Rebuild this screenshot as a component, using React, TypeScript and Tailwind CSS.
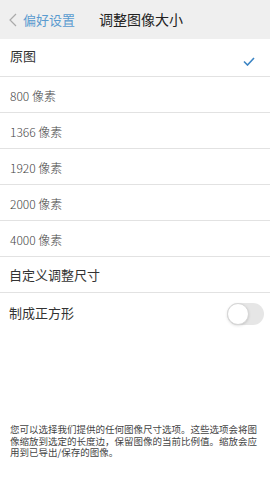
import React, { useState } from 'react';

const sizes = ['800 像素', '1366 像素', '1920 像素', '2000 像素', '4000 像素'];

export default function App() {
  const [square, setSquare] = useState(false);

  return (
    <div
      className="w-[270px] h-[480px] bg-white text-[#333] overflow-hidden"
      style={{ fontFamily: '"Noto Sans CJK SC", "Noto Sans", sans-serif' }}
    >
      {/* Header */}
      <div className="h-[39px] bg-[#efefef] flex items-center relative">
        <button className="flex items-center pl-[9px] text-[#5b9bd0] text-[13px]">
          <svg width="8" height="14" viewBox="0 0 8 14" className="mr-[6px]">
            <path d="M7 1 L1 7 L7 13" fill="none" stroke="#aaaaaa" strokeWidth="1.2" />
          </svg>
          偏好设置
        </button>
        <div className="absolute left-[99px] text-[14px] text-[#222]">调整图像大小</div>
      </div>

      {/* Options */}
      <div className="h-[38px] flex items-center justify-between pl-[10px] pr-[15px] border-b border-[#e2e2e2]">
        <span className="text-[13px] -mt-[4px]">原图</span>
        <svg width="12" height="9" viewBox="0 0 12 9" className="mt-[7px]">
          <path d="M1 4.5 L4.5 8 L11 1" fill="none" stroke="#3b84c4" strokeWidth="1.6" />
        </svg>
      </div>
      {sizes.map((s) => (
        <div key={s} className="h-[36px] flex items-center pl-[10px] border-b border-[#e2e2e2]">
          <span className="text-[12px] font-light text-[#444] mt-[2px]">{s}</span>
        </div>
      ))}
      <div className="h-[36px] flex items-center pl-[9px] border-b border-[#e2e2e2]">
        <span className="text-[13px]">自定义调整尺寸</span>
      </div>
      <div className="h-[42px] flex items-center justify-between pl-[9px] pr-[6px]">
        <span className="text-[13px] -mt-[3px]">制成正方形</span>
        <button
          onClick={() => setSquare(!square)}
          className={`w-[37px] h-[22px] rounded-full relative ${square ? 'bg-[#4cd964]' : 'bg-[#e6e6e6]'}`}
        >
          <span
            className={`absolute top-0 w-[22px] h-[22px] rounded-full bg-white border border-[#d6d6d6] shadow-sm ${square ? 'left-[15px]' : 'left-0'}`}
          />
        </button>
      </div>

      {/* Footer note */}
      <p className="mt-[89px] pl-[10px] pr-[8px] text-[9.5px] leading-[11.5px] text-[#444]">
        您可以选择我们提供的任何图像尺寸选项。这些选项会将图像缩放到选定的长度边，保留图像的当前比例值。缩放会应用到已导出/保存的图像。
      </p>
    </div>
  );
}
